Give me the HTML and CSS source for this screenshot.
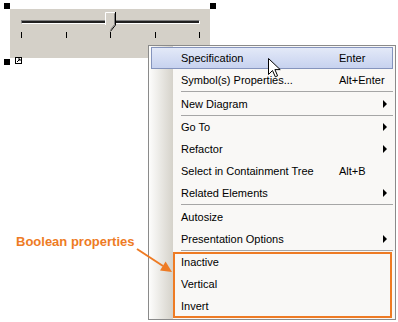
FILE: index.html
```html
<!DOCTYPE html>
<html lang="en">

<head>
    <meta charset="UTF-8">
    <title>Slider context menu</title>
    <link rel="stylesheet" href="styles.css">
</head>

<body>
    <div class="canvas">
        <!-- slider symbol on the diagram -->
        <div class="slider">
            <div class="track"></div>
            <div class="ticks">
                <span></span><span></span><span></span><span></span><span></span>
            </div>
            <svg class="thumb" width="11" height="20" viewBox="0 0 11 20">
                <path d="M0.5 0.5H10.5V13L5.5 19L0.5 13Z" fill="#d4d0c8" />
                <path d="M0.5 13V0.5H10" fill="none" stroke="#fff" />
                <path d="M10.5 0V13L5.5 19.3" fill="none" stroke="#000" />
                <path d="M9.5 1.5V12.6L5.5 17.6" fill="none" stroke="#808080" />
            </svg>
        </div>
        <span class="handle handle-tl"></span>
        <span class="handle handle-tr"></span>
        <span class="handle handle-bl"></span>
        <svg class="link-icon" width="7" height="7" viewBox="0 0 7 7">
            <rect x="0.5" y="0.5" width="6" height="6" fill="#fff" stroke="#000" />
            <path d="M2 5L5 2M3 2H5V4" fill="none" stroke="#000" />
        </svg>

        <!-- context menu -->
        <div class="menu">
            <div class="item active"><span class="label">Specification</span><span class="key">Enter</span></div>
            <div class="item"><span class="label">Symbol(s) Properties...</span><span class="key">Alt+Enter</span></div>
            <div class="sep"></div>
            <div class="item"><span class="label">New Diagram</span><span class="key sub"><i></i></span></div>
            <div class="sep"></div>
            <div class="item"><span class="label">Go To</span><span class="key sub"><i></i></span></div>
            <div class="item"><span class="label">Refactor</span><span class="key sub"><i></i></span></div>
            <div class="item"><span class="label">Select in Containment Tree</span><span class="key">Alt+B</span></div>
            <div class="item"><span class="label">Related Elements</span><span class="key sub"><i></i></span></div>
            <div class="sep"></div>
            <div class="item"><span class="label">Autosize</span></div>
            <div class="item"><span class="label">Presentation Options</span><span class="key sub"><i></i></span></div>
            <div class="sep"></div>
            <div class="item"><span class="label">Inactive</span></div>
            <div class="item"><span class="label">Vertical</span></div>
            <div class="item"><span class="label">Invert</span></div>
        </div>

        <!-- mouse pointer over the first item -->
        <svg class="cursor" width="13" height="20" viewBox="0 0 13 20">
            <path d="M0.5 0.5V16.5L4.5 12.5L7.3 18.8L9.6 17.8L6.9 11.6H12.2Z" fill="#fff" stroke="#000" />
        </svg>

        <!-- annotation -->
        <div class="callout-box"></div>
        <div class="callout-label">Boolean properties</div>
        <svg class="callout-arrow" width="50" height="40" viewBox="0 0 50 40">
            <line x1="7" y1="9" x2="33" y2="26" stroke="#ee7b24" stroke-width="2" />
            <polygon points="42,32 30,30.4 35.6,21.6" fill="#ee7b24" />
        </svg>
    </div>
</body>

</html>
```

FILE: styles.css
```css
body {
    margin: 0;
    background: #fff;
    font-family: 'Liberation Sans', Arial, sans-serif;
}

.canvas {
    position: relative;
    width: 398px;
    height: 322px;
    overflow: hidden;
}

/* slider */

.slider {
    position: absolute;
    left: 10px;
    top: 9px;
    width: 200px;
    height: 49px;
    background-color: #d4d0c8;
}

.track {
    margin: 11px 10px 0 11px;
    height: 2px;
    background-color: #202020;
    border-top: 1px solid #808080;
    border-bottom: 1px solid #fff;
    border-left: 1px solid #808080;
    border-right: 1px solid #fff;
}

.ticks {
    display: flex;
    justify-content: space-between;
    margin: 8px 10px 0 11px;
}

.ticks span {
    width: 1px;
    height: 6px;
    background-color: #000;
}

.thumb {
    position: absolute;
    left: 95px;
    top: 3px;
}

.handle {
    position: absolute;
    width: 6px;
    height: 6px;
    background-color: #000;
}

.handle-tl {
    left: 4px;
    top: 3px;
}

.handle-tr {
    left: 210px;
    top: 3px;
}

.handle-bl {
    left: 4px;
    top: 59px;
}

.link-icon {
    position: absolute;
    left: 15px;
    top: 57px;
}

/* menu */

.menu {
    position: absolute;
    left: 148px;
    top: 45px;
    width: 246px;
    padding: 1px 0 2px;
    border: 1px solid #8a8a8a;
    background-color: #f9f8f6;
    background-image: linear-gradient(to right, #fdfdfc, #d5d2ca);
    background-size: 24px 100%;
    background-repeat: no-repeat;
    font-size: 11px;
    color: #000;
}

.item {
    display: flex;
    align-items: center;
    height: 20px;
    line-height: 20px;
    margin: 0 2px;
    padding: 0 5px 0 29px;
    border: 1px solid transparent;
    white-space: nowrap;
}

.item.active {
    border-color: #8594bd;
    background: linear-gradient(#e3e9f8, #c7d2ef);
}

.label {
    flex: 1;
}

.key {
    width: 48px;
}

.key.sub {
    display: flex;
    justify-content: flex-end;
}

.key.sub i {
    width: 0;
    height: 0;
    border-left: 4px solid #000;
    border-top: 4px solid transparent;
    border-bottom: 4px solid transparent;
}

.sep {
    height: 0.5px;
    margin: 0 2px 0 32px;
    border-top: 1px solid #a6a6a6;
}

.cursor {
    position: absolute;
    left: 268px;
    top: 58px;
}

/* annotation */

.callout-box {
    position: absolute;
    left: 173px;
    top: 252px;
    width: 215px;
    height: 62px;
    border: 2px solid #ee7b24;
}

.callout-label {
    position: absolute;
    left: 16px;
    top: 234px;
    font-size: 13px;
    font-weight: bold;
    color: #ee7b24;
}

.callout-arrow {
    position: absolute;
    left: 130px;
    top: 240px;
}
```
